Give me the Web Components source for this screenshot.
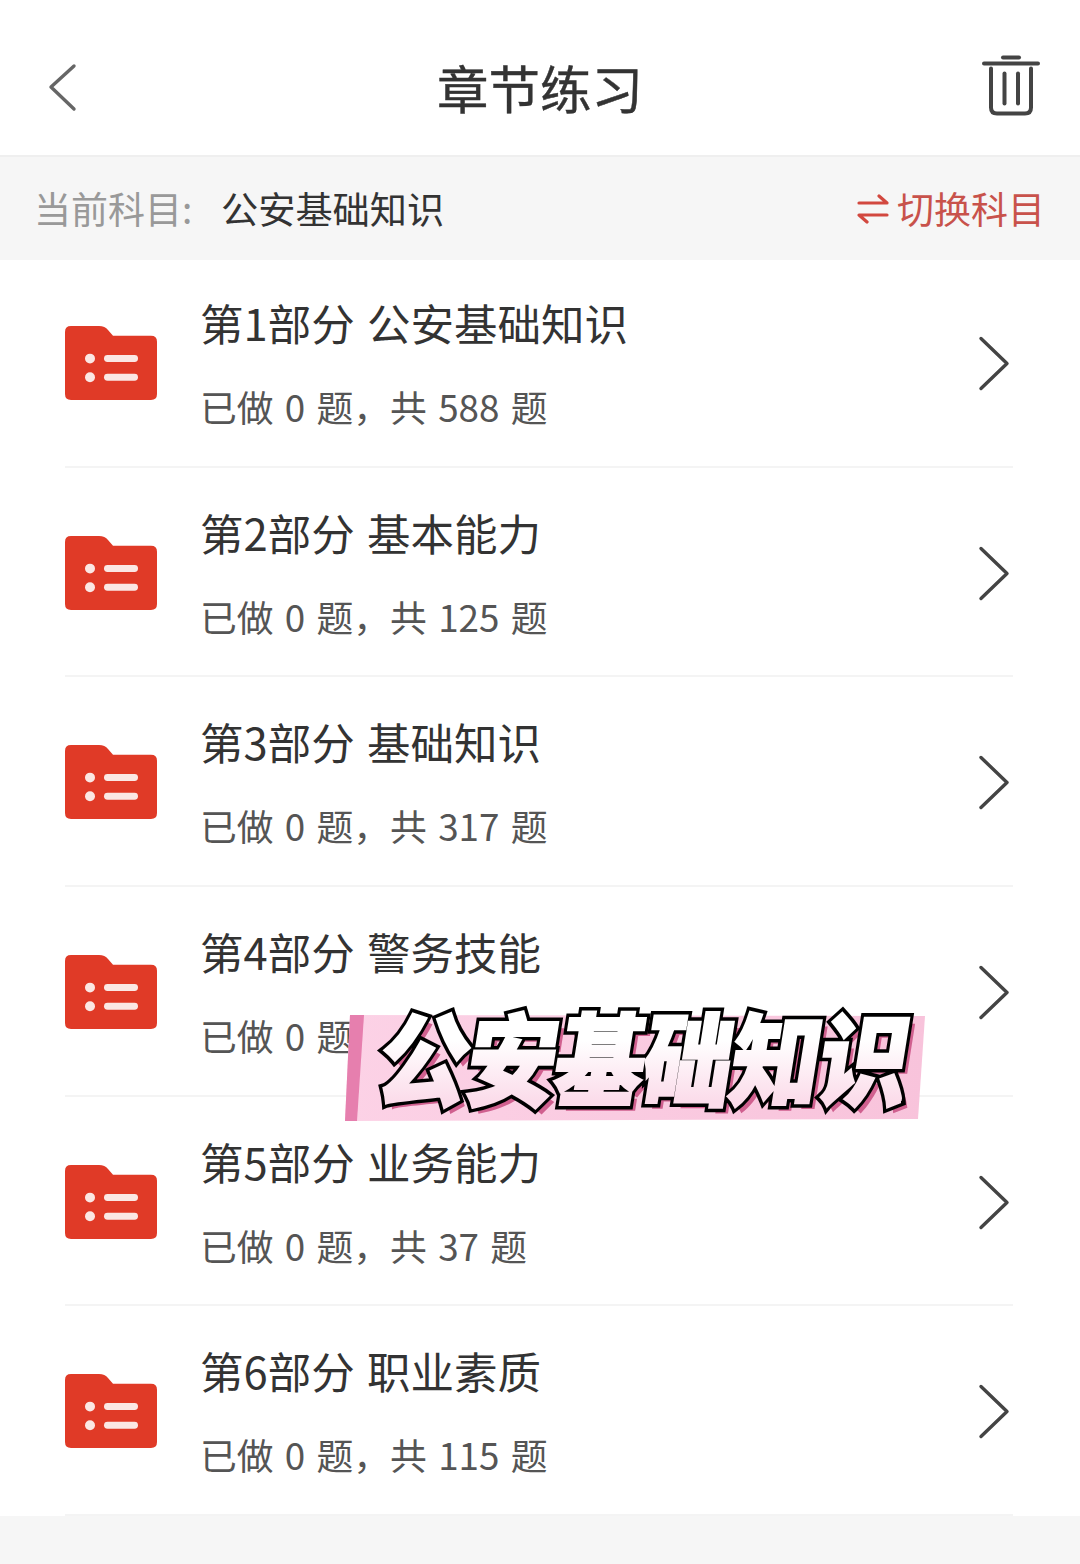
<!DOCTYPE html>
<html lang="zh">
<head>
<meta charset="utf-8">
<title>章节练习</title>
<style>
    html, body {
        margin: 0;
        padding: 0;
        background: #f6f6f6;
        font-family: "Noto Sans CJK SC", "Noto Sans", sans-serif;
    }
</style>
</head>
<body>
<practice-page>
    <top-bar title-text="章节练习"></top-bar>
    <subject-bar label="当前科目:" subject="公安基础知识" action="切换科目"></subject-bar>
    <chapter-list>
        <chapter-row title-text="第1部分 公安基础知识" total="588"></chapter-row>
        <chapter-row title-text="第2部分 基本能力" total="125"></chapter-row>
        <chapter-row title-text="第3部分 基础知识" total="317"></chapter-row>
        <chapter-row title-text="第4部分 警务技能" total="29"></chapter-row>
        <chapter-row title-text="第5部分 业务能力" total="37"></chapter-row>
        <chapter-row title-text="第6部分 职业素质" total="115"></chapter-row>
    </chapter-list>
    <promo-banner text="公安基础知识"></promo-banner>
</practice-page>

<script>
class PracticePage extends HTMLElement {
    constructor() {
        super();
        this._shadowRoot = this.attachShadow({mode: 'open'});
    }

    connectedCallback() {
        this._shadowRoot.innerHTML = `
            <style>
                :host {
                    display: flex;
                    flex-direction: column;
                    position: relative;
                    width: 1080px;
                    height: 1564px;
                    overflow: hidden;
                    background: #f6f6f6;
                }
            </style>
            <slot></slot>
        `;
    }
}

class TopBar extends HTMLElement {
    constructor() {
        super();
        this._shadowRoot = this.attachShadow({mode: 'open'});
    }

    connectedCallback() {
        this._shadowRoot.innerHTML = `
            <style>
                :host {
                    display: grid;
                    grid-template-columns: 1fr auto 1fr;
                    align-items: center;
                    box-sizing: border-box;
                    height: 157px;
                    padding: 18px 40px 0 40px;
                    background: #fff;
                    border-bottom: 2px solid #efefef;
                }
                h1 {
                    margin: 0;
                    font-size: 51.5px;
                    font-weight: 400;
                    line-height: 1;
                    color: #333;
                    -webkit-text-stroke: 0.4px #333;
                }
                svg { display: block; }
                .back { margin-left: 8px; transform: translateY(1px); }
                .trash { justify-self: end; transform: translateY(-1.5px); }
            </style>
            <svg class="back" width="30" height="50" viewBox="0 0 30 50" fill="none" stroke="#666" stroke-width="3.4" stroke-linecap="round" stroke-linejoin="round">
                <path d="M26 3 3 24l23 22"/>
            </svg>
            <h1>${this.getAttribute('title-text')}</h1>
            <svg class="trash" width="58" height="62" viewBox="0 0 58 62" fill="none" stroke="#444" stroke-width="4" stroke-linecap="round" stroke-linejoin="round">
                <path d="M21 3h16"/>
                <path d="M2 9h54"/>
                <path d="M9 14v39q0 6 6 6h28q6 0 6-6V14"/>
                <path d="M22.500 19v30"/>
                <path d="M36 19v30"/>
            </svg>
        `;
    }
}

class SubjectBar extends HTMLElement {
    constructor() {
        super();
        this._shadowRoot = this.attachShadow({mode: 'open'});
    }

    connectedCallback() {
        this._shadowRoot.innerHTML = `
            <style>
                :host {
                    display: flex;
                    align-items: center;
                    position: relative;
                    z-index: 1;
                    box-sizing: border-box;
                    height: 103px;
                    margin-bottom: -2px;
                    padding: 0 35px 0 34px;
                    background: #f6f6f6;
                    font-size: 37px;
                    line-height: 1;
                }
                .label { color: #999; width: 187px; }
                .subject { color: #333; flex: 1; font-size: 37.2px; }
                .action {
                    display: flex;
                    align-items: center;
                    gap: 6px;
                    color: #c8524b;
                }
                svg { display: block; transform: translateX(-2px); }
            </style>
            <span class="label">${this.getAttribute('label')}</span>
            <span class="subject">${this.getAttribute('subject')}</span>
            <span class="action">
                <svg width="32" height="30" viewBox="0 0 32 30" fill="none" stroke="#d2483f" stroke-width="3.2" stroke-linecap="round" stroke-linejoin="round">
                    <path d="M2 9h28L22 2"/>
                    <path d="M30 21H2l8 7"/>
                </svg>
                <span>${this.getAttribute('action')}</span>
            </span>
        `;
    }
}

class ChapterList extends HTMLElement {
    constructor() {
        super();
        this._shadowRoot = this.attachShadow({mode: 'open'});
    }

    connectedCallback() {
        this._shadowRoot.innerHTML = `
            <style>
                :host {
                    display: grid;
                    grid-auto-rows: 209.7px;
                    background: #fff;
                }
            </style>
            <slot></slot>
        `;
    }
}

class ChapterRow extends HTMLElement {
    constructor() {
        super();
        this._shadowRoot = this.attachShadow({mode: 'open'});
    }

    connectedCallback() {
        const title = this.getAttribute('title-text');
        const total = this.getAttribute('total');
        this._shadowRoot.innerHTML = `
            <style>
                :host {
                    display: block;
                    padding-left: 65px;
                    background: #fff;
                }
                .inner {
                    display: flex;
                    align-items: center;
                    box-sizing: border-box;
                    width: 948px;
                    height: 100%;
                    padding-right: 3px;
                    border-bottom: 2px solid #f4f4f4;
                }
                .icon { margin-right: 43px; flex: none; display: block; transform: translateY(1px); }
                .text { flex: 1; display: flex; flex-direction: column; gap: 40px; transform: translateY(.5px); }
                .title { font-size: 43.5px; line-height: 46px; color: #333; word-spacing: 2.500px; }
                .sub { font-size: 36.8px; line-height: 40px; color: #555; word-spacing: 3px; }
                .chev { display: block; flex: none; transform: translateY(1.500px); }
            </style>
            <div class="inner">
                <svg class="icon" width="92" height="74" viewBox="0 0 92 75" preserveAspectRatio="none">
                    <path fill="#e03a27" d="M6 0h28q6 0 9 4l5 6h38q6 0 6 6v53q0 6-6 6H6q-6 0-6-6V6q0-6 6-6z"/>
                    <g fill="#fff" opacity=".88">
                        <circle cx="25" cy="33" r="5"/>
                        <circle cx="25" cy="52" r="5"/>
                        <rect x="39" y="29.500" width="34" height="7" rx="3.500"/>
                        <rect x="39" y="48.500" width="34" height="7" rx="3.500"/>
                    </g>
                </svg>
                <div class="text">
                    <div class="title">${title}</div>
                    <div class="sub">已做 0 题，共 ${total} 题</div>
                </div>
                <svg class="chev" width="32" height="56" viewBox="0 0 32 56" fill="none" stroke="#444" stroke-width="3.4" stroke-linecap="round" stroke-linejoin="round">
                    <path d="M3 3l26 25L3 53"/>
                </svg>
            </div>
        `;
    }
}

class PromoBanner extends HTMLElement {
    constructor() {
        super();
        this._shadowRoot = this.attachShadow({mode: 'open'});
    }

    connectedCallback() {
        const text = this.getAttribute('text');
        this._shadowRoot.innerHTML = `
            <style>
                :host {
                    display: block;
                    position: absolute;
                    left: 343px;
                    top: 1003px;
                    width: 590px;
                    height: 120px;
                }
                svg { position: absolute; left: 0; top: 0; }
                .word {
                    position: absolute;
                    left: 38px;
                    top: -9px;
                    font-size: 90px;
                    font-weight: 900;
                    line-height: 120px;
                    white-space: nowrap;
                    letter-spacing: -2px;
                    transform: skewX(-9deg) scaleY(1.12);
                    color: #000;
                    -webkit-text-stroke: 8.500px #000;
                    text-shadow: 7px 6px 0 #d0608f;
                }
                .word::after {
                    content: attr(data-text);
                    position: absolute;
                    left: 0;
                    top: 0;
                    -webkit-text-stroke: 2.200px transparent;
                    text-shadow: none;
                    color: transparent;
                    background: linear-gradient(180deg, #fff 40%, #fbdcea 85%);
                    -webkit-background-clip: text;
                    background-clip: text;
                }
            </style>
            <svg width="590" height="120" viewBox="0 0 590 120">
                <defs>
                    <linearGradient id="band" x1="0" y1="0" x2="1" y2="0">
                        <stop offset="0" stop-color="#fcd2e6"/>
                        <stop offset="1" stop-color="#f8c3db"/>
                    </linearGradient>
                </defs>
                <polygon points="7,12 582,13 575,116 2,118" fill="url(#band)"/>
                <polygon points="7,12 21,12 14,118 2,118" fill="#e67fae"/>
            </svg>
            <div class="word" data-text="${text}">${text}</div>
        `;
    }
}

customElements.define('practice-page', PracticePage);
customElements.define('top-bar', TopBar);
customElements.define('subject-bar', SubjectBar);
customElements.define('chapter-list', ChapterList);
customElements.define('chapter-row', ChapterRow);
customElements.define('promo-banner', PromoBanner);
</script>
</body>
</html>
